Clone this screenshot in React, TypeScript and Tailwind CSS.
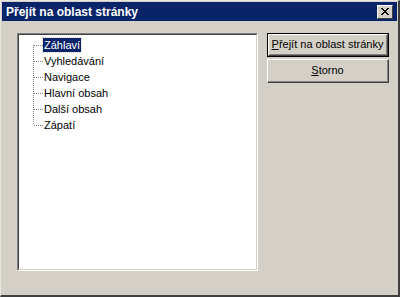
import { Fragment } from 'react';

const ITEMS = ['Záhlaví', 'Vyhledávání', 'Navigace', 'Hlavní obsah', 'Další obsah', 'Zápatí'];

// Dotted tree connector for one row (vertical trunk + short branch)
function Connector({ first, last }: { first: boolean; last: boolean }) {
  return (
    <svg width="10" height="16" className="shrink-0" shapeRendering="crispEdges">
      <line
        x1="0.5"
        x2="0.5"
        y1={first ? 8 : 0}
        y2={last ? 8 : 16}
        stroke="#808080"
        strokeDasharray="1 1"
      />
      <line x1="1" x2="10" y1="8.5" y2="8.5" stroke="#808080" strokeDasharray="1 1" />
    </svg>
  );
}

function Win2kButton({ label, hotkey, isDefault = false }: { label: string; hotkey: number; isDefault?: boolean }) {
  const text = (
    <>
      {label.slice(0, hotkey)}
      <span className="underline">{label[hotkey]}</span>
      {label.slice(hotkey + 1)}
    </>
  );
  return (
    <div className={`h-[24px] w-[122px] ${isDefault ? 'border border-black' : ''}`}>
      <div className="h-full w-full border-t border-l border-white border-r border-b border-r-[#404040] border-b-[#404040]">
        <div className="h-full w-full border-r border-b border-[#808080] flex items-center justify-center text-[11px] text-black">
          {text}
        </div>
      </div>
    </div>
  );
}

export default function App() {
  return (
    <div
      className="w-[400px] h-[297px] bg-[#d4d0c8] border-t border-l border-[#e8e6e0] border-r-2 border-b-2 border-r-[#404040] border-b-[#404040] flex flex-col"
      style={{ fontFamily: '"Liberation Sans", Arial, sans-serif' }}
    >
      {/* Title bar */}
      <div className="mx-[1px] mt-[1px] h-[19px] bg-[#0a246a] flex items-center justify-between pl-[4px] pr-[4px]">
        <span className="text-white font-bold text-[12px] leading-none">Přejít na oblast stránky</span>
        <div className="w-[16px] h-[14px] bg-[#d4d0c8] border-t border-l border-white border-r border-b border-r-[#404040] border-b-[#404040] flex items-center justify-center">
          <svg width="8" height="7" viewBox="0 0 8 7" shapeRendering="crispEdges">
            <path d="M0 0h2v1H0zM6 0h2v1H6zM1 1h2v1H1zM5 1h2v1H5zM2 2h4v1H2zM3 3h2v1H3zM2 4h4v1H2zM1 5h2v1H1zM5 5h2v1H5zM0 6h2v1H0zM6 6h2v1H6z" fill="#000" />
          </svg>
        </div>
      </div>

      {/* Body */}
      <div className="flex pl-[16px] pt-[12px] gap-[9px]">
        {/* Tree view */}
        <div className="w-[241px] h-[238px] border-t border-l border-[#808080] border-r border-b border-r-white border-b-white">
          <div className="h-full w-full bg-white border-t border-l border-[#404040] border-r border-b border-r-[#d4d0c8] border-b-[#d4d0c8] pt-[2px] pl-[14px]">
            {ITEMS.map((item, i) => (
              <Fragment key={item}>
                <div className="flex items-center h-[16px]">
                  <Connector first={i === 0} last={i === ITEMS.length - 1} />
                  <span
                    className={`text-[11px] leading-[14px] px-[1px] ${
                      i === 0 ? 'bg-[#0a246a] text-white outline outline-1 outline-dotted outline-[#d4d0c8]' : 'text-black'
                    }`}
                  >
                    {item}
                  </span>
                </div>
              </Fragment>
            ))}
          </div>
        </div>

        {/* Buttons */}
        <div className="flex flex-col gap-[2px]">
          <Win2kButton label="Přejít na oblast stránky" hotkey={0} isDefault />
          <Win2kButton label="Storno" hotkey={0} />
        </div>
      </div>
    </div>
  );
}
